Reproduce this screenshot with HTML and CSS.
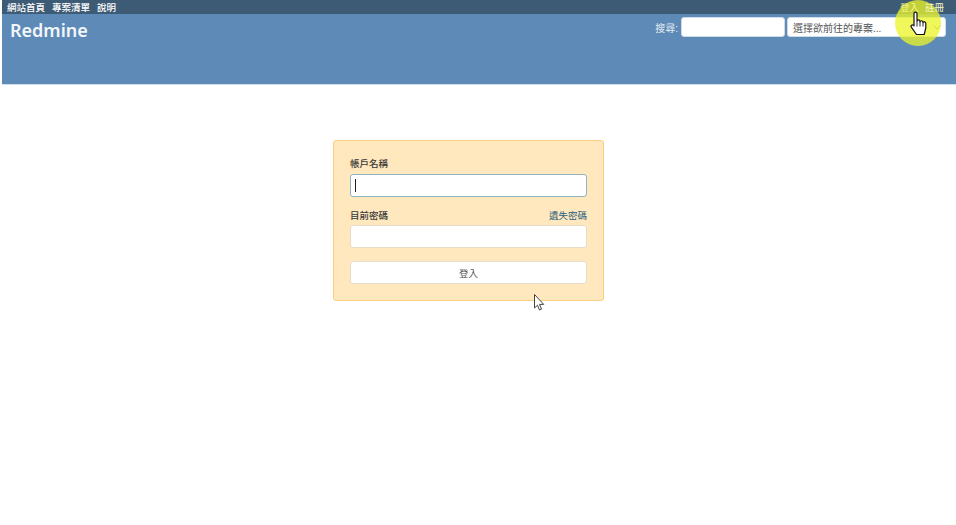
FILE: index.html
```html
<!DOCTYPE html>
<html lang="zh-Hant">
<head>
<meta charset="utf-8">
<title>Redmine</title>
<link rel="stylesheet" href="styles.css">
</head>
<body>
<div class="top-menu">
  <nav class="menu-group">
    <a href="#">網站首頁</a>
    <a href="#">專案清單</a>
    <a href="#">說明</a>
  </nav>
  <nav class="menu-group account">
    <a class="hover" href="#">登入</a>
    <a class="near" href="#">註冊</a>
  </nav>
</div>
<header class="header">
  <h1 class="brand">Redmine</h1>
  <div class="quick">
    <label class="search-label" for="q">搜尋:</label>
    <input class="search-input" id="q" type="text">
    <div class="jump">
      <span>選擇欲前往的專案...</span>
      <svg class="chev" width="8" height="5" viewBox="0 0 8 5"><path d="M.5.500l3.500 3.500 3.500-3.500" fill="none" stroke="#7d7d7d" stroke-width="1"/></svg>
    </div>
  </div>
</header>
<main class="main">
  <form class="login">
    <label class="field-label" for="u">帳戶名稱</label>
    <div class="input focus" id="u"><span class="caret"></span></div>
    <div class="label-row">
      <label class="field-label">目前密碼</label>
      <a class="lost" href="#">遺失密碼</a>
    </div>
    <div class="input"></div>
    <button class="submit" type="button">登入</button>
  </form>
</main>
<div class="spot"></div>
<svg class="hand" width="20" height="25" viewBox="0 0 20 25"><path d="M4 2.500c0-1.800 3-1.800 3 0v7.500c.3-1.500 2.700-1.500 3 0v.8c.3-1.400 2.700-1.400 3 0v.8c.3-1.200 2.800-1 2.800.7v4.700l-1.600 6.500h-7.700l-5.200-7.300c-1-1.600 1-2.900 2.200-1.800l.5.500z" fill="#fff" stroke="#111" stroke-width="1.200" stroke-linejoin="round"/><path d="M7 10v5.500M10 10.500v5M13 11.500v4" stroke="#111" stroke-width=".9"/></svg>
<svg class="arrow" width="11" height="17" viewBox="0 0 11 17"><path d="M.5.500v13.500l3-2.800 2 4.800 2-.9-2-4.700h4.200z" fill="#fff" stroke="#444" stroke-width="1"/></svg>
</body>
</html>
```
FILE: styles.css
```css
html, body { margin: 0; padding: 0; }
body {
  position: relative;
  height: 525px;
  overflow: hidden;
  padding-left: 2px;
  background: #fff;
  font-family: "Liberation Sans", "Noto Sans CJK TC", sans-serif;
  font-size: 9.5px;
  color: #333;
}
.top-menu {
  display: flex;
  justify-content: space-between;
  height: 14px;
  padding: 0 12px 0 5px;
  background: #3e5b76;
  line-height: 15px;
}
.menu-group { display: flex; gap: 7px; }
.account { gap: 6px; }
.menu-group a { color: #fff; text-decoration: none; font-weight: 500; }
.menu-group .hover, .menu-group .near { position: relative; z-index: 1; font-weight: 400; }
.menu-group .hover { color: #f4f58a; }
.menu-group .near { color: #f5f6c8; }
.header {
  display: flex;
  justify-content: space-between;
  align-items: flex-start;
  height: 71px;
  background: #5d8ab6;
  border-bottom: 1px solid #cfdde9;
  box-sizing: border-box;
}
.brand {
  margin: 3px 0 0 8px;
  color: #f2f6fa;
  font-family: "Noto Sans", sans-serif;
  font-size: 18px;
  font-weight: 600;
  line-height: 27px;
}
.quick {
  display: flex;
  align-items: center;
  margin: 3px 10px 0 0;
  color: #e4ecf4;
  font-size: 10px;
}
.search-label { margin-right: 3px; }
.search-input {
  width: 104px;
  height: 20px;
  box-sizing: border-box;
  margin: 0 2px 0 0;
  border: 1px solid #d0dbe6;
  border-radius: 3px;
  background: #fff;
}
.jump {
  display: flex;
  align-items: center;
  justify-content: space-between;
  width: 159px;
  height: 20px;
  box-sizing: border-box;
  padding: 0 4px 0 5px;
  border: 1px solid #d0dbe6;
  border-radius: 3px;
  background: #fff;
  color: #555;
}
.main { padding-top: 55px; }
.login {
  display: flex;
  flex-direction: column;
  width: 271px;
  height: 161px;
  box-sizing: border-box;
  margin-left: 331px;
  padding: 16px 16px 0;
  background: #ffe8bd;
  border: 1px solid #f7d07f;
  border-radius: 3px;
}
.field-label { color: #3a3a3a; font-weight: 500; line-height: 14px; }
.input {
  display: flex;
  align-items: center;
  height: 23px;
  box-sizing: border-box;
  margin-top: 3px;
  padding-left: 4px;
  background: #fff;
  border: 1px solid #e6dcc8;
  border-radius: 3px;
}
.input.focus { border-color: #8fb3c2; }
.caret { width: 1px; height: 13px; background: #222; }
.label-row {
  display: flex;
  justify-content: space-between;
  height: 13px;
  margin-top: 12px;
}
.lost { color: #2a6082; line-height: 14px; text-decoration: none; }
.submit {
  height: 23px;
  margin-top: 13px;
  padding: 0;
  background: #fff;
  border: 1px solid #e6dcc8;
  border-radius: 3px;
  color: #555;
  font: inherit;
}
.spot {
  position: absolute;
  left: 895px;
  top: 0;
  width: 46px;
  height: 46px;
  border-radius: 50%;
  background: rgba(235, 245, 40, .76);
}
.hand { position: absolute; left: 910px; top: 11px; }
.arrow { position: absolute; left: 534px; top: 294px; }
```
